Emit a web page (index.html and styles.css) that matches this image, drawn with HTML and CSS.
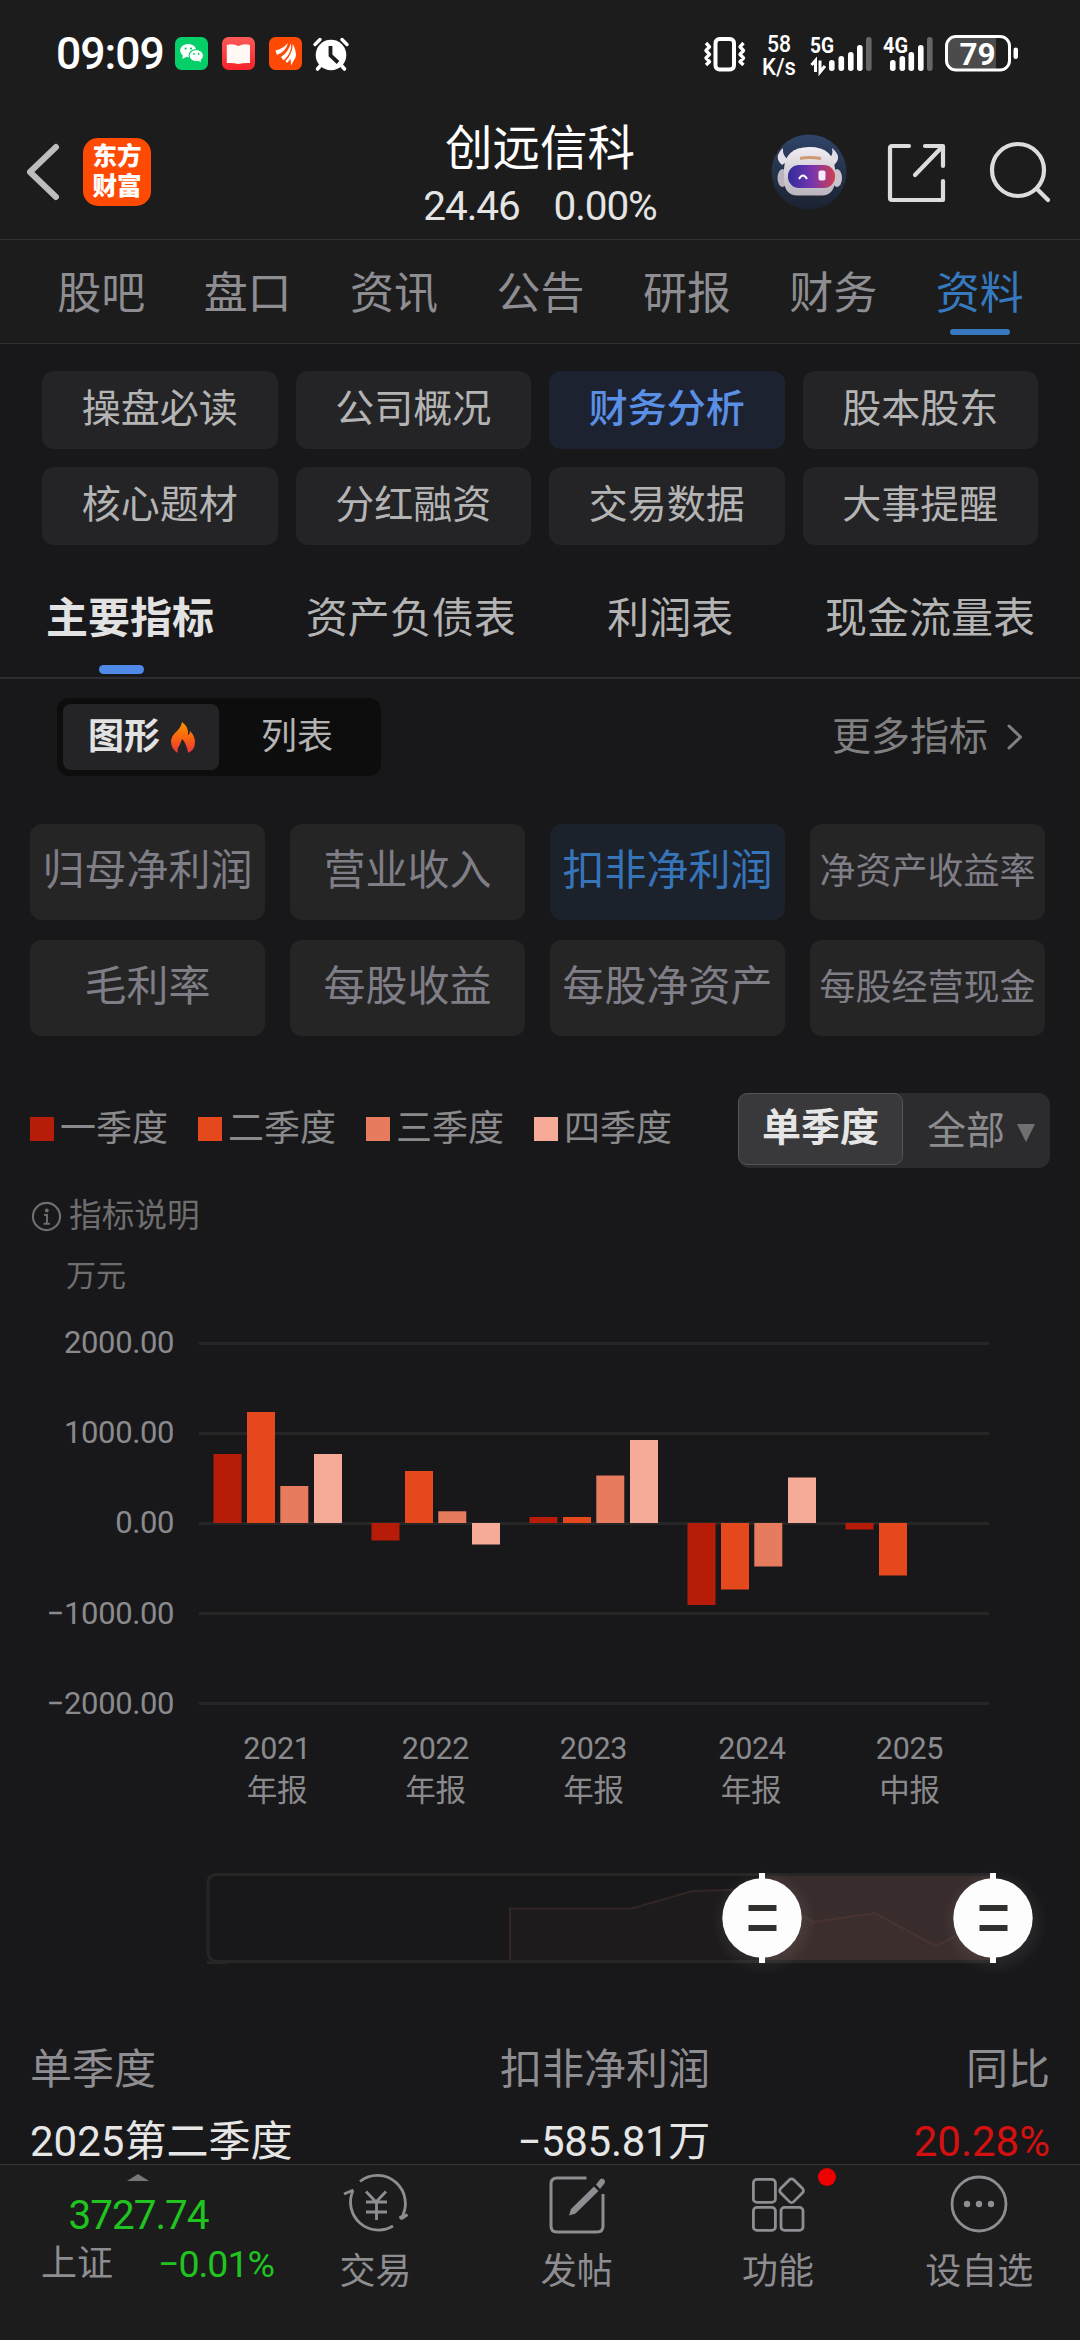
FILE: index.html
```html
<!DOCTYPE html>
<html lang="zh-CN">
<head>
<meta charset="utf-8">
<title>创远信科 - 财务分析</title>
<link rel="stylesheet" href="styles.css">
</head>
<body>
<div class="app">
  <header class="top">
    <div class="status">
      <div class="status-left">
        <span class="clock">09:09</span>
        <svg class="notif" viewBox="0 0 33 33"><rect width="33" height="33" rx="6.5" fill="#04cf68"/><ellipse cx="13.2" cy="13.6" rx="8" ry="6.7" fill="#fff"/><path d="M8 18l-.8 4 4-2z" fill="#fff"/><ellipse cx="21.3" cy="18.6" rx="7.2" ry="6.1" fill="#fff" stroke="#04cf68" stroke-width="1.1"/><path d="M23 23.5l3 1.8-.6-3z" fill="#fff"/><g fill="#04cf68"><circle cx="10.6" cy="11.6" r="1.1"/><circle cx="16" cy="11.6" r="1.1"/><circle cx="19" cy="17" r=".9"/><circle cx="23.6" cy="17" r=".9"/></g></svg>
        <svg class="notif" viewBox="0 0 33 33"><defs><linearGradient id="book" x1="0" y1="0" x2="0" y2="1"><stop offset="0" stop-color="#fb5a58"/><stop offset="1" stop-color="#f9222b"/></linearGradient></defs><rect width="33" height="33" rx="6.5" fill="url(#book)"/><path d="M4.800 8q6-2 11.500 1 6-3 11.700-1v18q-6-.500-11.700 1-5.500-1.500-11.500-1z" fill="#fff8f5"/></svg>
        <svg class="notif" viewBox="0 0 33 33"><rect width="33" height="33" rx="6.500" fill="#ff4a06"/><g fill="#fff"><path d="M6.500 13.500q7-1.500 12.500-7.500Q17 14.500 8 18z"/><path d="M12 20Q19.500 15 22 6 23.500 15.500 14.500 23.500z"/><path d="M16.500 24Q23.500 17 23.800 7 28 15 26.500 20.500L22 28.500q0-4-.500-6.500l-3.500 4z"/></g></svg>
        <svg class="alarm" viewBox="0 0 36 34"><g stroke="#fff" stroke-linecap="round" fill="none"><path d="M2 7.500L7 2.500M34 7.500L29 2.500" stroke-width="3.400"/><path d="M8 28l-3.500 4M28 28l3.500 4" stroke-width="3.600"/></g><circle cx="18" cy="18" r="15.300" fill="#fff"/><path d="M17.500 9v9.500l7.500 7" fill="none" stroke="#1c1c1c" stroke-width="3.800"/></svg>
      </div>
      <div class="status-right">
        <svg class="vibrate" viewBox="0 0 44 34"><rect x="12.500" y="2" width="18.500" height="30.500" rx="4" fill="none" stroke="#fff" stroke-width="4"/><path d="M3 6l3.500 3.800-3.500 3.700 3.500 3.800L3 21l3.500 3.700L3 28M40.500 6L37 9.800l3.500 3.700-3.500 3.800 3.500 3.700-3.500 3.700 3.500 3.300" fill="none" stroke="#fff" stroke-width="3.400" stroke-linejoin="round"/></svg>
        <svg class="speed" viewBox="0 0 36 44"><text x="18" y="19" textLength="24" lengthAdjust="spacingAndGlyphs">58</text><text x="18" y="41.500" textLength="34" lengthAdjust="spacingAndGlyphs">K/s</text></svg>
        <svg class="signal" viewBox="0 0 63 36"><text x="0" y="17" class="net" textLength="24" lengthAdjust="spacingAndGlyphs">5G</text><path d="M1.500 29l4-4.500V36M10 24.500V36l5-6" fill="none" stroke="#fff" stroke-width="3"/><g fill="#fff"><rect x="19" y="24" width="5.600" height="11" rx="2.700"/><rect x="28.500" y="20" width="5.600" height="15" rx="2.700"/><rect x="38" y="16" width="5.600" height="19" rx="2.700"/><rect x="47" y="9" width="5.600" height="26" rx="2.700"/><rect x="56" y="1" width="5.600" height="34" rx="2.700" opacity=".33"/></g></svg>
        <svg class="signal sim2" viewBox="0 0 51 36"><text x="0" y="17" class="net" textLength="25" lengthAdjust="spacingAndGlyphs">4G</text><g fill="#fff"><rect x="7" y="24" width="5.600" height="11" rx="2.700"/><rect x="16.500" y="20" width="5.600" height="15" rx="2.700"/><rect x="25.500" y="16" width="5.600" height="19" rx="2.700"/><rect x="35" y="9" width="5.600" height="26" rx="2.700"/><rect x="44" y="1" width="5.600" height="34" rx="2.700" opacity=".33"/></g></svg>
        <svg class="battery" viewBox="0 0 74 37"><path d="M3 11q0-8 8-8h40v31H11q-8 0-8-8z" fill="#4b4b4b"/><rect x="1.500" y="1.500" width="63" height="33.500" rx="9.500" fill="none" stroke="#fff" stroke-width="3"/><rect x="68.500" y="12.500" width="4.500" height="11.500" rx="2.200" fill="#fff"/><text x="32.500" y="30" text-anchor="middle" class="charge">79</text></svg>
      </div>
    </div>
    <div class="titlebar">
      <div class="nav-left">
        <svg class="back" viewBox="0 0 36 58"><path d="M31 4L5 29l26 25" fill="none" stroke="#bdbdbd" stroke-width="6" stroke-linecap="round" stroke-linejoin="round"/></svg>
        <div class="brand">东方<br>财富</div>
      </div>
      <div class="stock">
        <h1>创远信科</h1>
        <div class="quote"><span>24.46</span><span>0.00%</span></div>
      </div>
      <div class="nav-right">
        <svg class="avatar" viewBox="0 0 76 76"><defs><linearGradient id="sky" x1="0" y1="0" x2="0" y2="1"><stop offset="0" stop-color="#2f4467"/><stop offset="1" stop-color="#1b2230"/></linearGradient><linearGradient id="visor"><stop offset="0" stop-color="#2f2c9c"/><stop offset=".5" stop-color="#7635b0"/><stop offset="1" stop-color="#d0404f"/></linearGradient><linearGradient id="shell" x1="0" y1="0" x2="0" y2="1"><stop offset="0" stop-color="#f1edf2"/><stop offset="1" stop-color="#b9b4bd"/></linearGradient></defs><circle cx="38" cy="38" r="37.500" fill="url(#sky)"/><path d="M12 14Q2 23 11 31l7-5q-7-4-6-12zM61 14q11 9 2 17l-7-5q7-4 5-12z" fill="#e3dfe8"/><ellipse cx="11.500" cy="44" rx="5" ry="9" fill="#b9b4be"/><ellipse cx="66" cy="44" rx="5" ry="9" fill="#c9c4ce"/><path d="M13 35Q14 13.500 38 13t26 22v12q-1 14-13 14.500H26Q14 61 13 47z" fill="url(#shell)"/><path d="M29 24.500q9-2 21 0" stroke="#cf9a70" stroke-width="3" fill="none"/><rect x="17" y="31" width="47" height="23" rx="11" fill="url(#visor)"/><path d="M28 45q4-7 8 0" fill="none" stroke="#fff" stroke-width="2"/><rect x="47.500" y="36.500" width="7" height="10" rx="2" fill="#f7eaff"/></svg>
        <svg class="share" viewBox="0 0 60 60"><g fill="none" stroke="#dcdcdc" stroke-width="4.200" stroke-linecap="round" stroke-linejoin="round"><path d="M22 3H5Q3 3 3 5v50q0 2 2 2h51V38"/><path d="M38 3h18v20M55 4L28 32"/></g></svg>
        <svg class="search" viewBox="0 0 62 62"><g fill="none" stroke="#dcdcdc" stroke-width="4.200" stroke-linecap="round"><circle cx="29" cy="29" r="26"/><path d="M48 48l11 11"/></g></svg>
      </div>
    </div>
    <nav class="tabs">
      <a>股吧</a><a>盘口</a><a>资讯</a><a>公告</a><a>研报</a><a>财务</a><a class="on">资料</a>
    </nav>
  </header>

  <main class="content">
    <div class="chips">
      <span>操盘必读</span><span>公司概况</span><span class="on">财务分析</span><span>股本股东</span>
      <span>核心题材</span><span>分红融资</span><span>交易数据</span><span>大事提醒</span>
    </div>
    <nav class="subtabs">
      <a class="on">主要指标</a><a>资产负债表</a><a>利润表</a><a>现金流量表</a>
    </nav>
    <div class="viewbar">
      <div class="toggle">
        <span class="on">图形<svg class="flame" viewBox="0 0 24 31"><defs><linearGradient id="fire" x1="0" y1="0" x2="0" y2="1"><stop offset="0" stop-color="#fb9300"/><stop offset=".5" stop-color="#f9640f"/><stop offset="1" stop-color="#e8353b"/></linearGradient></defs><path d="M11 0q7 5 6 13 2-1 2-4 5 5 5 11 0 8-7 11 0-1-.500-3-2-8-5.500-11-2 6-4 9-1 2 0 5Q0 27 0 19.500 0 15 4 11 10 6 11 0z" fill="url(#fire)"/></svg></span>
        <span>列表</span>
      </div>
      <a class="more">更多指标<svg viewBox="0 0 18 28"><path d="M3 3l11.500 11L3 25" fill="none" stroke="#808080" stroke-width="3" stroke-linecap="round" stroke-linejoin="round"/></svg></a>
    </div>
    <div class="metrics">
      <span>归母净利润</span><span>营业收入</span><span class="on">扣非净利润</span><span class="long">净资产收益率</span>
      <span>毛利率</span><span>每股收益</span><span>每股净资产</span><span class="long">每股经营现金</span>
    </div>
    <div class="legendbar">
      <ul class="legend">
        <li class="q1">一季度</li><li class="q2">二季度</li><li class="q3">三季度</li><li class="q4">四季度</li>
      </ul>
      <div class="segment"><span class="on">单季度</span><span class="all">全部<svg viewBox="0 0 18 18"><path d="M0 0h18L9 18z" fill="#707070"/></svg></span></div>
    </div>
    <div class="note"><svg viewBox="0 0 32 32"><circle cx="16" cy="16" r="14" fill="none" stroke="#6e6e6e" stroke-width="2.200"/><circle cx="16.300" cy="9.800" r="2" fill="#6e6e6e"/><path d="M13.500 14.500h3V23M13 23.500h6.500" fill="none" stroke="#6e6e6e" stroke-width="2"/></svg>指标说明</div>
    <svg class="chart" viewBox="0 0 1080 590">
      <text class="unit" x="66" y="45.500">万元</text>
      <g fill="#262627">
        <rect x="199" y="102" width="790" height="3"/><rect x="199" y="192" width="790" height="3"/><rect x="199" y="282" width="790" height="3"/><rect x="199" y="372" width="790" height="3"/><rect x="199" y="462" width="790" height="3"/>
      </g>
      <g class="axis-y">
        <text x="174" y="113">2000.00</text><text x="174" y="203">1000.00</text><text x="174" y="293">0.00</text><text x="174" y="383.500">−1000.00</text><text x="174" y="474">−2000.00</text>
      </g>
      <g fill="#b71c08">
        <rect x="213.500" y="214" width="28" height="69"/><rect x="371.500" y="283" width="28" height="17.500"/><rect x="529.500" y="277" width="28" height="6"/><rect x="687.500" y="283" width="28" height="82"/><rect x="845.500" y="283" width="28" height="6.500"/>
      </g>
      <g fill="#e6481e">
        <rect x="247" y="172" width="28" height="111"/><rect x="405" y="231" width="28" height="52"/><rect x="563" y="277" width="28" height="6"/><rect x="721" y="283" width="28" height="66.500"/><rect x="879" y="283" width="28" height="52.500"/>
      </g>
      <g fill="#e67c5d">
        <rect x="280.300" y="246" width="28" height="37"/><rect x="438.300" y="271.300" width="28" height="11.700"/><rect x="596.300" y="235.500" width="28" height="47.500"/><rect x="754.300" y="283" width="28" height="43.500"/>
      </g>
      <g fill="#f6ab98">
        <rect x="314" y="214" width="28" height="69"/><rect x="472" y="283" width="28" height="21.500"/><rect x="630" y="200" width="28" height="83"/><rect x="788" y="237.500" width="28" height="45.500"/>
      </g>
      <g class="axis-x">
        <text x="277" y="519">2021</text><text x="435.500" y="519">2022</text><text x="593.500" y="519">2023</text><text x="752" y="519">2024</text><text x="909.500" y="519">2025</text>
        <text x="277" y="561">年报</text><text x="435.500" y="561">年报</text><text x="593.500" y="561">年报</text><text x="751" y="561">年报</text><text x="909.500" y="561">中报</text>
      </g>
    </svg>
    <svg class="range" viewBox="0 0 1080 150">
      <defs><radialGradient id="glow"><stop offset=".72" stop-color="#fff" stop-opacity=".06"/><stop offset="1" stop-color="#fff" stop-opacity="0"/></radialGradient></defs>
      <path d="M993 44.500H218q-10 0-10 9v67q0 11 10 11h775M207 132.500h20" fill="none" stroke="#262627" stroke-width="3"/>
      <rect x="763" y="46" width="230" height="84" fill="#382c2c"/>
      <path d="M510 130V78.500h122l60-17.500 71-2 50 33 62-9 61 33 57-30v44z" fill="#8a5048" fill-opacity=".06"/>
      <path d="M510 130V78.500h122l60-17.500 71-2 50 33 62-9 61 33 57-30" fill="none" stroke="#6a4540" stroke-opacity=".3" stroke-width="2"/>
      <circle cx="764" cy="92" r="52" fill="url(#glow)"/><circle cx="995" cy="92" r="52" fill="url(#glow)"/>
      <path d="M762 43v90M993 43v90" stroke="#fff" stroke-width="6"/>
      <circle cx="762" cy="88" r="39.700" fill="#fdfdfd"/><circle cx="993" cy="88" r="39.700" fill="#fdfdfd"/>
      <path d="M748.500 78h28M748.500 98h28M979.500 78h28M979.500 98h28" stroke="#32302e" stroke-width="6"/>
    </svg>
    <div class="table">
      <div class="row head"><span>单季度</span><span>扣非净利润</span><span>同比</span></div>
      <div class="row"><span>2025第二季度</span><span class="value">−585.81万</span><span class="up">20.28%</span></div>
    </div>
  </main>

  <footer class="bottom">
    <div class="index">
      <svg class="caret" viewBox="0 0 22 7"><path d="M0 7L11 0l11 7z" fill="#77777a"/></svg>
      <strong>3727.74</strong>
      <div class="index-line"><span>上证</span><em>−0.01%</em></div>
    </div>
    <a class="action"><svg viewBox="0 0 66 60"><g fill="none" stroke="#8e8d92" stroke-width="2.800" stroke-linejoin="round"><path d="M17 7.500A28 28 0 0 1 58 44.500M58 45l6.500-4.500M58.500 45l-1.500-3M50 52A28 28 0 0 1 10 16.500M1 20l9.500-4"/><path d="M23 17.500l10 10.500 10-10.500M23 28h21M23 38h21M33.500 28v18"/></g></svg>交易</a>
    <a class="action"><svg viewBox="0 0 66 60"><path d="M43.500 4H14q-6 0-6 6v42q0 6 6 6h40q6 0 6-6V20" transform="translate(-1)" fill="none" stroke="#8e8d92" stroke-width="3"/><path d="M50 12.500l4.500 4.500-23 22.500-6.500 2 2-6.500zM52 10.500l4-5q2-2 4 0t0 4.500l-4 5z" fill="#8e8d92"/></svg>发帖</a>
    <a class="action"><svg viewBox="0 0 66 60"><g fill="none" stroke="#8e8d92" stroke-width="2.800"><rect x="8.400" y="5.400" width="22" height="23" rx="3.500"/><rect x="8.400" y="33.400" width="22" height="23" rx="3.500"/><rect x="36" y="33.400" width="22" height="23" rx="3.500"/><rect x="37.400" y="7.400" width="18.500" height="18.500" rx="3" transform="rotate(45 46.600 16.600)"/></g></svg>功能<i class="dot"></i></a>
    <a class="action"><svg viewBox="0 0 66 60"><circle cx="33" cy="30" r="27" fill="none" stroke="#8e8d92" stroke-width="2.800"/><g fill="#8e8d92"><circle cx="21" cy="30" r="3.200"/><circle cx="33" cy="30" r="3.200"/><circle cx="45" cy="30" r="3.200"/></g></svg>设自选</a>
  </footer>
</div>
</body>
</html>
```

FILE: styles.css
```css
* { box-sizing: border-box; margin: 0; padding: 0; }
body {
  width: 1080px;
  height: 2340px;
  overflow: hidden;
  background: #18181a;
  color: #b4b4b4;
  font-family: Roboto, "Noto Sans CJK SC", sans-serif;
}
svg { display: block; flex: none; overflow: visible; }
a, span { white-space: nowrap; }
.app { height: 2340px; display: flex; flex-direction: column; }

/* Header */
.top { height: 344px; background: #1c1c1c; border-bottom: 1px solid #303030; }
.status { height: 107px; display: flex; justify-content: space-between; align-items: center; padding: 0 61px 0 56px; color: #fff; }
.status-left, .status-right { display: flex; align-items: center; }
.clock { width: 119px; font-size: 44.500px; line-height: 52px; font-weight: 500; letter-spacing: -1px; }
.notif { width: 33px; height: 33px; margin-right: 14px; }
.alarm { width: 36px; height: 34px; margin-left: -3px; }
.vibrate { width: 44px; height: 34px; }
.speed { width: 36px; height: 44px; margin: 2px 13px 0 14px; font-size: 23px; font-weight: 500; fill: #fff; text-anchor: middle; }
.signal { width: 63px; height: 36px; }
.sim2 { width: 51px; margin-left: 10px; margin-right: 11px; }
.net { font-size: 22px; font-weight: 700; fill: #fff; }
.battery { width: 74px; height: 37px; }
.charge { font-size: 31.500px; font-weight: 700; fill: #fff; }

.titlebar { height: 132px; display: grid; grid-template-columns: 1fr auto 1fr; align-items: start; }
.nav-left { display: flex; align-items: center; padding: 31px 0 0 25px; }
.back { width: 36px; height: 58px; }
.brand { width: 68px; height: 68px; margin-left: 22px; padding-top: 4px; border-radius: 15px; background: #ff4a04; color: #fff; font-size: 24.500px; line-height: 30px; font-weight: 900; text-align: center; }
.stock { text-align: center; }
.stock h1 { font-size: 47.500px; line-height: 56px; font-weight: 400; color: #fff; padding-top: 14px; }
.quote { display: flex; gap: 34px; justify-content: center; font-size: 40.500px; line-height: 46px; letter-spacing: -1.100px; color: #e4e4e4; margin-top: 6px; }
.nav-right { display: flex; justify-content: flex-end; align-items: flex-start; padding: 27px 29px 0 0; }
.avatar { width: 76px; height: 76px; }
.share { width: 60px; height: 60px; margin: 9px 0 0 40px; }
.search { width: 62px; height: 62px; margin: 7px 0 0 42px; }

.tabs { height: 104px; border-top: 1px solid #333; display: grid; grid-template-columns: repeat(7, 1fr); padding: 0 27px 0 28px; }
.tabs a { display: flex; flex-direction: column; align-items: center; padding-top: 23px; font-size: 44px; line-height: 62px; color: #8e8d92; }
.tabs .on { color: #3779be; }
.tabs .on::after { content: ""; width: 60px; height: 6px; margin-top: 4px; border-radius: 3px; background: #3779be; }

/* Section chips */
.content { flex: 1; min-height: 0; overflow: hidden; }
.chips { display: grid; grid-template-columns: repeat(4, 1fr); gap: 18px; padding: 27px 42px 0; }
.chips span { height: 78px; border-radius: 12px; background: #242427; text-align: center; font-size: 39px; line-height: 77px; }
.chips .on { background: #1d2230; color: #5a8fe6; font-weight: 500; }
.subtabs { height: 134px; display: flex; justify-content: space-between; padding: 44px 45px 0 46px; border-bottom: 2px solid #2d2d2f; font-size: 42px; line-height: 60px; }
.subtabs .on { color: #e2e2e2; font-weight: 700; display: flex; flex-direction: column; align-items: center; }
.subtabs .on::after { content: ""; width: 45px; height: 9px; margin-top: 16px; margin-right: 17px; border-radius: 5px; background: #4f8ae8; }

.viewbar { display: flex; justify-content: space-between; padding: 19px 56px 0 57px; }
.toggle { width: 324px; height: 78px; padding: 6px; display: flex; border-radius: 12px; background: #0d0d0d; font-size: 36px; line-height: 66px; }
.toggle span { flex: 1; text-align: center; }
.toggle .on { flex: 0 0 156px; display: flex; align-items: center; padding-left: 25px; border-radius: 8px; background: #242427; color: #e2e2e2; font-weight: 700; }
.flame { width: 24px; height: 31px; margin-left: 11px; }
.more { display: flex; align-items: center; font-size: 39px; line-height: 76px; height: 78px; color: #808080; }
.more svg { width: 18px; height: 28px; margin: 0 0 0 18px; }

.metrics { display: grid; grid-template-columns: repeat(4, 235px); gap: 20px 25px; padding: 48px 0 0 30px; }
.metrics span { height: 96px; border-radius: 12px; background: #252525; color: #7f7d86; text-align: center; font-size: 42px; line-height: 93px; }
.metrics .long { font-size: 36px; line-height: 96px; }
.metrics .on { background: #1c222b; color: #3775bb; }

/* Legend and filter */
.legendbar { height: 75px; margin-top: 57px; display: flex; justify-content: space-between; padding: 0 30px; }
.legend { display: flex; gap: 30px; list-style: none; font-size: 36px; line-height: 73px; color: #8a8a8c; }
.legend li { display: flex; gap: 6px; }
.legend li::before { content: ""; width: 24px; height: 24px; margin-top: 24px; background: var(--c); }
.q1 { --c: #b71c08; } .q2 { --c: #e6481e; } .q3 { --c: #e67c5d; } .q4 { --c: #f6ab98; }
.segment { width: 312px; height: 75px; display: flex; border-radius: 12px; background: #2c2c2e; font-size: 39px; line-height: 74px; color: #8c8c8e; }
.segment span { display: flex; align-items: center; justify-content: center; }
.segment .on { width: 165px; height: 72px; padding-bottom: 2px; border: 1.500px solid #545456; border-radius: 9px; background: #39393b; color: #e6e6e6; font-weight: 700; }
.segment .all { flex: 1; justify-content: flex-end; padding-right: 15px; }
.segment svg { width: 18px; height: 18px; margin: 5px 0 0 12px; }
.note { height: 54px; margin-top: 21px; padding-left: 31px; display: flex; align-items: center; font-size: 32.700px; line-height: 50px; color: #6e6e6e; }
.note svg { width: 31px; height: 31px; margin-right: 7px; }

/* Chart */
.chart { width: 1080px; height: 590px; margin-top: -3px; }
.unit { font-size: 30px; fill: #6e6e6e; }
.axis-y { font-size: 31px; letter-spacing: -.400px; fill: #8a8a8d; text-anchor: end; }
.axis-x { font-size: 30.500px; letter-spacing: -.300px; fill: #8a8a8d; text-anchor: middle; }
.range { width: 1080px; height: 150px; }

.table { padding: 65px 30px 0; }
.row { height: 72px; display: grid; grid-template-columns: 250px 1fr 340px; font-size: 42px; line-height: 50px; color: #e6e6e6; }
.row span:nth-child(2), .row span:nth-child(3) { text-align: right; }
.row .value { letter-spacing: -.300px; }
.head { color: #8e8d92; }
.row .up { color: #d51010; }

/* Bottom bar */
.bottom { height: 176px; border-top: 1px solid #353535; background: #1c1c1c; display: flex; color: #8e8d92; font-size: 36px; }
.index { width: 275px; padding-top: 9px; display: flex; flex-direction: column; align-items: center; }
.caret { width: 22px; height: 7px; }
.index strong { font-size: 40.500px; line-height: 48px; letter-spacing: -1px; font-weight: 400; color: #20c420; margin: 10px 0 0 2px; }
.index-line { align-self: stretch; display: flex; justify-content: space-between; padding: 0 1px 0 41px; line-height: 50px; }
.index em { font-style: normal; font-size: 37.500px; letter-spacing: -1px; color: #20c420; }
.action { flex: 1; position: relative; padding-top: 9px; display: flex; flex-direction: column; align-items: center; line-height: 50px; }
.action svg { width: 66px; height: 60px; margin-bottom: 13px; }
.dot { position: absolute; left: 140px; top: 3px; width: 18px; height: 18px; border-radius: 50%; background: #ec0000; }
```
